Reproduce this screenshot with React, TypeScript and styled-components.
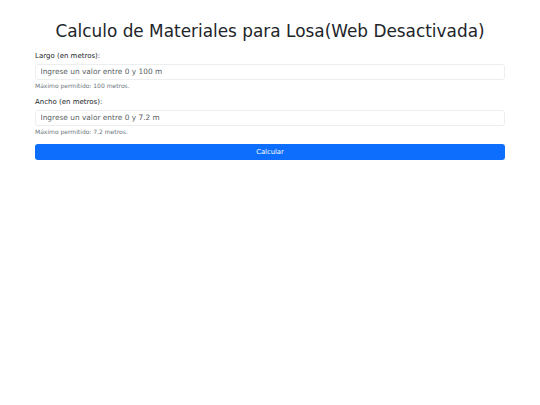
import React, { useState } from "react";
import styled, { createGlobalStyle } from "styled-components";

const GlobalStyle = createGlobalStyle`
  html, body {
    margin: 0;
    padding: 0;
    background: #ffffff;
    font-family: "DejaVu Sans", Verdana, sans-serif;
    color: #212529;
  }
`;

const Container = styled.div`
  width: 470px;
  margin: 0 auto;
  padding-top: 20px;
`;

const Title = styled.h1`
  margin: 0 0 8px;
  font-size: 16.9px;
  font-weight: 400;
  line-height: 22.8px;
  text-align: center;
  white-space: nowrap;
  color: #212529;
`;

const Group = styled.div<{ $gap: number }>`
  display: flex;
  flex-direction: column;
  margin-bottom: ${(p) => p.$gap}px;
`;

const Label = styled.label`
  font-size: 7px;
  line-height: 10.5px;
  margin-bottom: 2.5px;
`;

const Input = styled.input`
  box-sizing: border-box;
  height: 16px;
  width: 100%;
  padding: 0 4.5px;
  border: 1px solid #eceef0;
  border-radius: 3px;
  font-family: inherit;
  font-size: 7.4px;
  color: #212529;
  outline: none;

  &::placeholder {
    color: #5a5f64;
  }
`;

const Hint = styled.small`
  margin-top: 2px;
  font-size: 6px;
  line-height: 7px;
  color: #6c757d;
`;

const Button = styled.button`
  box-sizing: border-box;
  width: 100%;
  height: 16px;
  border: none;
  border-radius: 3px;
  background: #0d6efd;
  color: #ffffff;
  font-family: inherit;
  font-size: 6.8px;
  cursor: pointer;
`;

const App: React.FC = () => {
  const [largo, setLargo] = useState("");
  const [ancho, setAncho] = useState("");

  return (
    <>
      <GlobalStyle />
      <Container>
        <Title>Calculo de Materiales para Losa(Web Desactivada)</Title>
        <Group $gap={8}>
          <Label htmlFor="largo">Largo (en metros):</Label>
          <Input
            id="largo"
            placeholder="Ingrese un valor entre 0 y 100 m"
            value={largo}
            onChange={(e) => setLargo(e.target.value)}
          />
          <Hint>Máximo permitido: 100 metros.</Hint>
        </Group>
        <Group $gap={4}>
          <Label htmlFor="ancho">Ancho (en metros):</Label>
          <Input
            id="ancho"
            placeholder="Ingrese un valor entre 0 y 7.2 m"
            value={ancho}
            onChange={(e) => setAncho(e.target.value)}
          />
          <Hint>Máximo permitido: 7.2 metros.</Hint>
        </Group>
        <Button>Calcular</Button>
      </Container>
    </>
  );
};

export default App;
